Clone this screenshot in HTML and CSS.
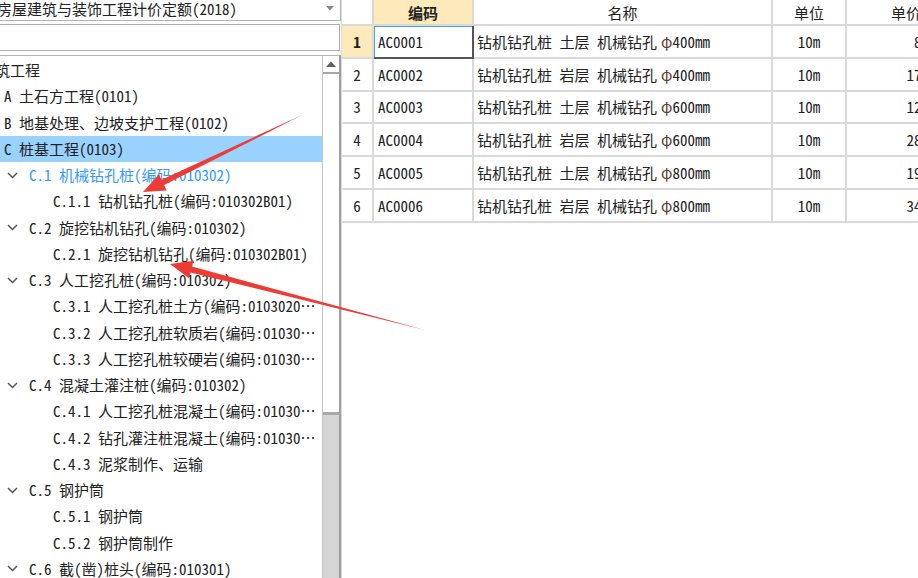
FILE: index.html
```html
<!DOCTYPE html>
<html lang="zh-CN">
<head>
    <meta charset="UTF-8">
    <meta name="viewport" content="width=device-width, initial-scale=1.0">
    <title>定额库</title>
    <link rel="stylesheet" href="styles.css">
</head>
<body>
    <div class="app">
        <div class="left">
            <div class="combo">
                <span class="combo-text">房屋建筑与装饰工程计价定额(2018)</span>
                <svg class="combo-arrow" width="8" height="5" viewBox="0 0 8 5"><path d="M0 0H8L4 4.5Z" fill="#8a8a8a"/></svg>
            </div>
            <div class="search"></div>
            <div class="tree">
                <ul class="tree-list">
                    <li class="node lv0"><span class="label">建筑工程</span></li>
                    <li class="node lv1"><span class="label">A 土石方工程(0101)</span></li>
                    <li class="node lv1"><span class="label">B 地基处理、边坡支护工程(0102)</span></li>
                    <li class="node lv1 sel"><span class="label">C 桩基工程(0103)</span></li>
                    <li class="node lv2 cur"><svg class="chev" width="11" height="7" viewBox="0 0 11 7"><path d="M1 1L5.5 5.5L10 1" /></svg><span class="label">C.1 机械钻孔桩(编码:010302)</span></li>
                    <li class="node lv3"><span class="label">C.1.1 钻机钻孔桩(编码:010302B01)</span></li>
                    <li class="node lv2"><svg class="chev" width="11" height="7" viewBox="0 0 11 7"><path d="M1 1L5.5 5.5L10 1" /></svg><span class="label">C.2 旋挖钻机钻孔(编码:010302)</span></li>
                    <li class="node lv3"><span class="label">C.2.1 旋挖钻机钻孔(编码:010302B01)</span></li>
                    <li class="node lv2"><svg class="chev" width="11" height="7" viewBox="0 0 11 7"><path d="M1 1L5.5 5.5L10 1" /></svg><span class="label">C.3 人工挖孔桩(编码:010302)</span></li>
                    <li class="node lv3"><span class="label">C.3.1 人工挖孔桩土方(编码:0103020⋯</span></li>
                    <li class="node lv3"><span class="label">C.3.2 人工挖孔桩软质岩(编码:01030⋯</span></li>
                    <li class="node lv3"><span class="label">C.3.3 人工挖孔桩较硬岩(编码:01030⋯</span></li>
                    <li class="node lv2"><svg class="chev" width="11" height="7" viewBox="0 0 11 7"><path d="M1 1L5.5 5.5L10 1" /></svg><span class="label">C.4 混凝土灌注桩(编码:010302)</span></li>
                    <li class="node lv3"><span class="label">C.4.1 人工挖孔桩混凝土(编码:01030⋯</span></li>
                    <li class="node lv3"><span class="label">C.4.2 钻孔灌注桩混凝土(编码:01030⋯</span></li>
                    <li class="node lv3"><span class="label">C.4.3 泥浆制作、运输</span></li>
                    <li class="node lv2"><svg class="chev" width="11" height="7" viewBox="0 0 11 7"><path d="M1 1L5.5 5.5L10 1" /></svg><span class="label">C.5 钢护筒</span></li>
                    <li class="node lv3"><span class="label">C.5.1 钢护筒</span></li>
                    <li class="node lv3"><span class="label">C.5.2 钢护筒制作</span></li>
                    <li class="node lv2"><svg class="chev" width="11" height="7" viewBox="0 0 11 7"><path d="M1 1L5.5 5.5L10 1" /></svg><span class="label">C.6 截(凿)桩头(编码:010301)</span></li>
                </ul>
                <div class="vscroll">
                    <div class="vs-btn"><svg width="10" height="6" viewBox="0 0 10 6"><path d="M0 6L5 0.5L10 6Z" fill="#606060"/></svg></div>
                    <div class="vs-thumb"></div>
                    <div class="vs-track"></div>
                </div>
            </div>
        </div>

        <div class="right">
            <div class="grid">
                <div class="cell head"></div>
                <div class="cell head hl">编码</div>
                <div class="cell head">名称</div>
                <div class="cell head">单位</div>
                <div class="cell head">单价</div>

                <div class="cell num hl">1</div>
                <div class="cell code focus">AC0001</div>
                <div class="cell name">钻机钻孔桩 土层 机械钻孔 <span class="phi">φ</span>400mm</div>
                <div class="cell unit">10m</div>
                <div class="cell price">845.62</div>

                <div class="cell num">2</div>
                <div class="cell code">AC0002</div>
                <div class="cell name">钻机钻孔桩 岩层 机械钻孔 <span class="phi">φ</span>400mm</div>
                <div class="cell unit">10m</div>
                <div class="cell price">1768.35</div>

                <div class="cell num">3</div>
                <div class="cell code">AC0003</div>
                <div class="cell name">钻机钻孔桩 土层 机械钻孔 <span class="phi">φ</span>600mm</div>
                <div class="cell unit">10m</div>
                <div class="cell price">1236.82</div>

                <div class="cell num">4</div>
                <div class="cell code">AC0004</div>
                <div class="cell name">钻机钻孔桩 岩层 机械钻孔 <span class="phi">φ</span>600mm</div>
                <div class="cell unit">10m</div>
                <div class="cell price">2854.19</div>

                <div class="cell num">5</div>
                <div class="cell code">AC0005</div>
                <div class="cell name">钻机钻孔桩 土层 机械钻孔 <span class="phi">φ</span>800mm</div>
                <div class="cell unit">10m</div>
                <div class="cell price">1943.50</div>

                <div class="cell num">6</div>
                <div class="cell code">AC0006</div>
                <div class="cell name">钻机钻孔桩 岩层 机械钻孔 <span class="phi">φ</span>800mm</div>
                <div class="cell unit">10m</div>
                <div class="cell price">3467.28</div>
            </div>
        </div>
    </div>

    <!-- 标注箭头 -->
    <svg class="marks" width="918" height="578" viewBox="0 0 918 578">
        <polygon points="302,115 164.1,185.1 166.7,190.5 143,192 158.9,174.3 161.5,179.7"/>
        <polygon points="425,330 192,266.6 193.6,260.8 170,264 189,278.2 190.5,272.4"/>
    </svg>
</body>
</html>
```

FILE: styles.css
```css
* {
    box-sizing: border-box;
}
html, body {
    margin: 0;
}
body {
    position: relative;
    width: 918px;
    height: 578px;
    overflow: hidden;
    background: #fff;
    color: #222;
    font-family: "Noto Sans Mono CJK SC", "Noto Sans CJK SC", sans-serif;
    font-size: 15px;
}
.app {
    display: flex;
    height: 578px;
}

/* left pane */
.left {
    width: 341px;
    flex: none;
    display: flex;
    flex-direction: column;
    overflow: hidden;
}
.combo {
    height: 21px;
    flex: none;
    display: flex;
    align-items: flex-start;
    border-bottom: 1px solid #b4b4b4;
    border-right: 1px solid #b4b4b4;
    overflow: hidden;
}
.combo-text {
    flex: 1;
    margin-left: -3px;
    line-height: 17px;
    white-space: nowrap;
}
.combo-arrow {
    margin: 6px 6px 0 0;
}
.search {
    height: 27px;
    flex: none;
    margin: 3px 0 0 -2px;
    width: 342px;
    border: 1px solid #acacac;
}
.tree {
    flex: 1;
    min-height: 0;
    display: flex;
    margin-top: 4px;
    border-top: 1px solid #b4b4b4;
    border-right: 2px solid #9e9e9e;
}
.tree-list {
    flex: 1;
    margin: 0;
    padding: 1px 0 0;
    list-style: none;
    overflow: hidden;
}
.node {
    height: 26.25px;
    display: flex;
    align-items: center;
    white-space: nowrap;
    line-height: 18px;
}
.lv0 .label { margin-left: -20px; }
.lv1 .label { margin-left: 4px; }
.lv2 .chev { margin: 0 11px 0 7px; flex: none; }
.lv3 .label { margin-left: 53px; }
.chev path {
    fill: none;
    stroke: #555;
    stroke-width: 1.5;
}
.node.sel {
    background: #99d1ff;
}
.node.cur {
    color: #3399ff;
}

.vscroll {
    width: 17px;
    flex: none;
    display: flex;
    flex-direction: column;
    background: #d5d5d5;
    border-left: 1px solid #c6c6c6;
}
.vs-btn {
    height: 18px;
    display: flex;
    align-items: center;
    justify-content: center;
    background: #fff;
    border-bottom: 2px solid #a8a8a8;
}
.vs-thumb {
    height: 341px;
    background: #fff;
    border-bottom: 3px solid #a8a8a8;
}
.vs-track {
    flex: 1;
}

/* right pane */
.right {
    flex: 1;
    overflow: hidden;
    border-left: 1px solid #dcdcdc;
}
.grid {
    display: grid;
    grid-template-columns: 32px 100px 299px 74px 120px;
    grid-template-rows: 26px repeat(6, 32.8px);
    width: 625px;
}
.cell {
    display: flex;
    align-items: center;
    padding: 0 3px;
    white-space: nowrap;
    overflow: hidden;
    border-right: 2px solid #d9d9d9;
    border-bottom: 2px solid #d9d9d9;
}
.head {
    justify-content: center;
}
.hl {
    background: #fde9b9;
    font-weight: bold;
}
.num {
    justify-content: center;
}
.code {
    padding-left: 4px;
}
.focus {
    border-right-color: #555;
    border-bottom-color: #555;
    box-shadow: inset 1px 1px 0 #4ba3e3;
}
.unit {
    justify-content: center;
}
.price {
    justify-content: flex-end;
    padding-right: 6px;
}
.phi {
    color: #5e4030;
    margin-left: 4px;
}

/* annotation arrows */
.marks {
    position: absolute;
    left: 0;
    top: 0;
    pointer-events: none;
}
.marks polygon {
    fill: #ee3b36;
}
```
